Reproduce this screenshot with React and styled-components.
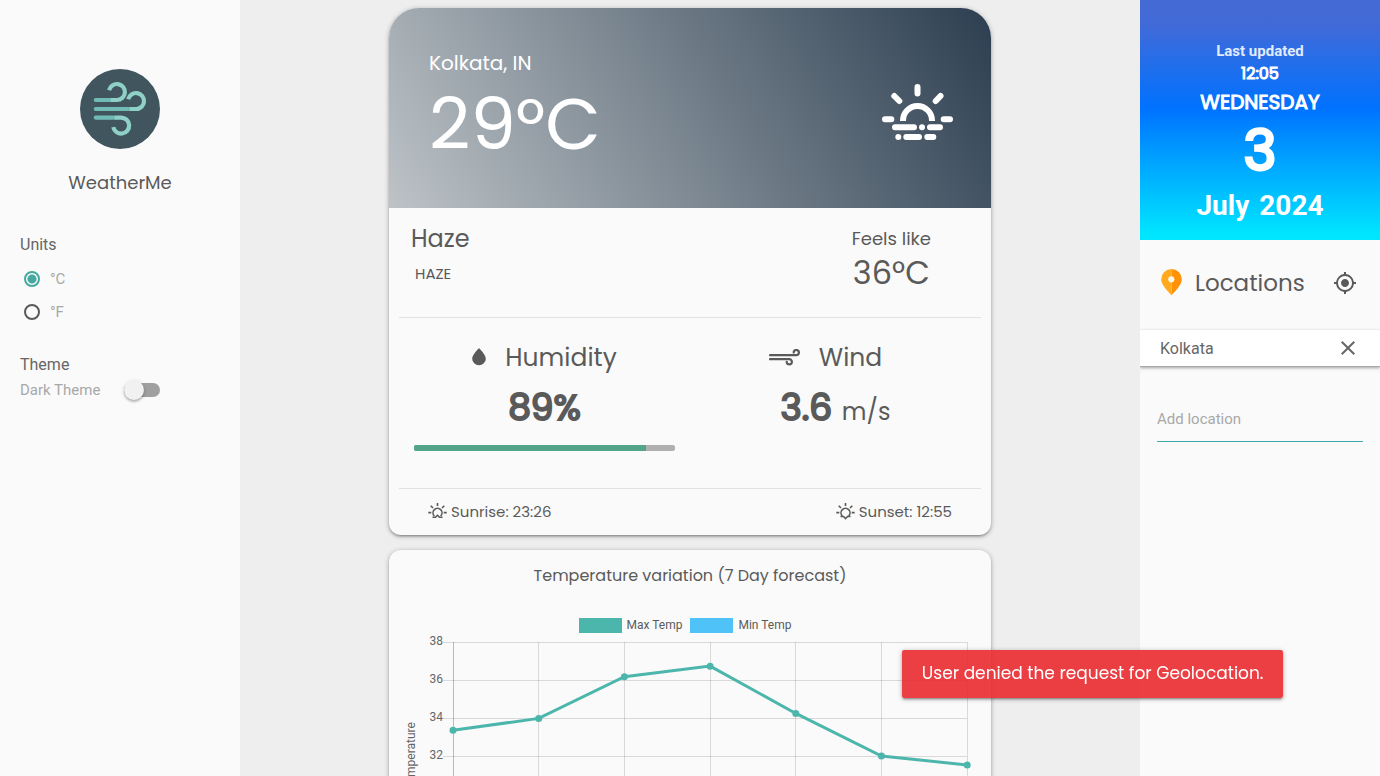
import React, { useState } from "react";
import styled, { createGlobalStyle } from "styled-components";
import { MdMyLocation, MdClose } from "react-icons/md";

const poppins = `Poppins, Inter, "Open Sans", sans-serif`;
const roboto = `Roboto, "Liberation Sans", sans-serif`;
const ink = "#5a5a5a";
const muted = "#a8a8a8";
const surface = "#fafafa";
const teal = "#4db6ac";
const lift = "0 2px 2px 0 rgba(0,0,0,.14), 0 3px 1px -2px rgba(0,0,0,.12), 0 1px 5px 0 rgba(0,0,0,.3)";

const GlobalStyle = createGlobalStyle`
  *, *::before, *::after { box-sizing: border-box; }
  body { margin: 0; background: #eeeeee; color: ${ink}; font-family: ${roboto}; font-size: 15px; }
  h1, h2, h3, p, fieldset, legend { margin: 0; padding: 0; border: 0; font-weight: 400; }
  button { border: 0; padding: 0; background: none; color: inherit; cursor: pointer; display: flex; }
`;

const Page = styled.div`
  display: grid;
  grid-template-columns: 240px minmax(0, 1fr) 240px;
  height: 100vh;
  overflow: hidden;
`;

/* ---------- left menu ---------- */

const Menu = styled.aside`
  background: ${surface};
  padding: 69px 20px 0;
`;

const Brand = styled.div`
  display: flex;
  flex-direction: column;
  align-items: center;
  gap: 20px;
  margin-bottom: 36px;
`;

const BrandName = styled.h1`
  font-family: ${poppins};
  font-size: 18px;
  line-height: 28px;
`;

const Group = styled.fieldset`
  display: flex;
  flex-direction: column;
  margin-bottom: 24px;
`;

const GroupTitle = styled.legend`
  color: #666666;
  font-size: 16px;
  line-height: 24px;
`;

const RadioLabel = styled.label`
  display: flex;
  align-items: center;
  gap: 10px;
  height: 33px;
  padding-left: 4px;
  color: ${muted};
  font-size: 15px;
`;

const RadioList = styled.div`
  padding: 5px 0 1px;
`;

const Radio = styled.input`
  appearance: none;
  width: 16px;
  height: 16px;
  margin: 0;
  border: 2px solid #5a5a5a;
  border-radius: 50%;
  &:checked {
    border-color: #45a99f;
    background: radial-gradient(circle, #45a99f 4px, transparent 5px);
  }
`;

const SwitchLabel = styled.label`
  display: flex;
  align-items: center;
  justify-content: space-between;
  width: 140px;
  height: 26px;
  color: ${muted};
  font-size: 15px;
`;

const Switch = styled.input`
  appearance: none;
  display: flex;
  align-items: center;
  width: 36px;
  height: 14px;
  margin: 0;
  border-radius: 7px;
  background: #a0a0a0;
  &::before {
    content: "";
    width: 20px;
    height: 20px;
    border-radius: 50%;
    background: #f1f1f1;
    box-shadow: 0 2px 2px rgba(0, 0, 0, .2), 0 1px 4px rgba(0, 0, 0, .15);
  }
  &:checked { justify-content: flex-end; background: ${teal}; }
`;

/* ---------- weather ---------- */

const Main = styled.main`
  display: flex;
  flex-direction: column;
  align-items: center;
  gap: 15px;
  padding: 8px 20px;
  overflow-y: auto;
  scrollbar-width: none;
`;

const Card = styled.section`
  flex: none;
  width: 100%;
  max-width: 602px;
  border-radius: ${(p) => (p.$hero ? "30px 30px 12px 12px" : "12px")};
  background: ${surface};
  box-shadow: ${lift};
  font-family: ${poppins};
`;

const Hero = styled.header`
  display: flex;
  justify-content: space-between;
  height: 200px;
  padding: 40px 38px 0 40px;
  border-radius: 30px 30px 0 0;
  background: linear-gradient(60deg, #bdc3c7, #2c3e50);
  color: #ffffff;
  svg { margin-top: 36px; }
`;

const City = styled.h2`
  font-size: 20px;
  line-height: 30px;
`;

const Degrees = styled.p`
  font-size: 72px;
  font-weight: 400;
  line-height: 92px;
`;

const Summary = styled.div`
  display: flex;
  justify-content: space-between;
  height: 109px;
  padding: 16px 60px 0 22px;
`;

const Condition = styled.h3`
  font-size: 24px;
  line-height: 30px;
`;

const Detail = styled.p`
  padding: 10px 0 0 4px;
  font-size: 15px;
  line-height: 20px;
`;

const Feels = styled.div`
  text-align: center;
  font-size: 18px;
  line-height: 30px;
`;

const FeelsValue = styled.p`
  font-size: 32px;
  line-height: 38px;
`;

const Rule = styled.hr`
  height: 1px;
  margin: 0 10px;
  border: 0;
  background: #e2e2e2;
`;

const Metrics = styled.div`
  display: grid;
  grid-template-columns: 1fr 1fr;
  height: 170px;
  padding: 22px 10px 0;
`;

const Metric = styled.div`
  display: flex;
  flex-direction: column;
  align-items: center;
  padding: 0 15px;
`;

const MetricName = styled.h3`
  display: flex;
  align-items: center;
  gap: 19px;
  padding-right: ${(p) => (p.$inset ? "20px" : "0")};
  font-size: 25px;
  line-height: 36px;
  svg { margin-bottom: 2px; }
`;

const MetricValue = styled.p`
  padding-top: 7px;
  font-size: 36px;
  line-height: 50px;
`;

const Strong = styled.strong`
  font-weight: 400;
  -webkit-text-stroke: 2px currentColor;
`;

const Unit = styled.span`
  font-size: 24px;
`;

const Track = styled.div`
  width: 100%;
  height: 6px;
  margin-top: 12px;
  border-radius: 2px;
  background: #b0b0b0;
  overflow: hidden;
`;

const Fill = styled.div`
  height: 100%;
  background: #52a586;
`;

const SunTimes = styled.footer`
  display: flex;
  justify-content: space-between;
  height: 46px;
  padding: 0 39px 2px;
  font-size: 15px;
`;

const SunTime = styled.p`
  display: flex;
  align-items: center;
  gap: 4px;
`;

const ChartTitle = styled.h2`
  padding-top: 12px;
  text-align: center;
  font-size: 16px;
  line-height: 28px;
`;

const Legend = styled.div`
  display: flex;
  justify-content: center;
  gap: 8px;
  padding: 28px 10px 0 0;
  font-family: ${roboto};
  font-size: 12px;
  line-height: 15px;
`;

const LegendItem = styled.span`
  display: flex;
  gap: 5px;
  &::before {
    content: "";
    width: 43px;
    height: 15px;
    background: ${(p) => p.$color};
  }
`;

const Chart = styled.svg`
  display: block;
  width: 100%;
  height: auto;
  font-family: ${roboto};
  font-size: 12px;
  fill: #666666;
`;

/* ---------- right panel ---------- */

const Panel = styled.aside`
  overflow: hidden;
  background: ${surface};
`;

const DateBox = styled.header`
  display: flex;
  flex-direction: column;
  align-items: center;
  height: 240px;
  padding-top: 40px;
  background: linear-gradient(#446ad4, #426ad8 10%, #0072ff 45%, #00e6ff 98%);
  color: #ffffff;
  font-family: ${poppins};
`;

const Updated = styled.p`
  color: #e0ebff;
  font-family: ${roboto};
  font-size: 15px;
  font-weight: 700;
  line-height: 22px;
`;

const Time = styled.p`
  font-size: 16px;
  line-height: 24px;
  -webkit-text-stroke: 1px currentColor;
`;

const Weekday = styled.p`
  font-size: 20px;
  line-height: 32px;
  -webkit-text-stroke: 1px currentColor;
`;

const Day = styled.p`
  padding-top: 2px;
  font-size: 56px;
  line-height: 62px;
  -webkit-text-stroke: 3px currentColor;
`;

const Month = styled.p`
  display: flex;
  gap: 10px;
  padding-top: 6px;
  font-family: ${roboto};
  font-size: 28px;
  font-weight: 700;
  line-height: 36px;
`;

const PanelTitle = styled.h2`
  display: flex;
  align-items: center;
  gap: 13px;
  height: 90px;
  padding: 0 23px 5px 21px;
  font-family: ${poppins};
  font-size: 23px;
  button { margin-left: auto; }
`;

const Place = styled.div`
  display: flex;
  align-items: center;
  justify-content: space-between;
  height: 37px;
  padding: 0 20px;
  border-bottom: 1px solid #a8a8a8;
  background: #ffffff;
  box-shadow: 0 1px 3px rgba(0, 0, 0, .35);
  color: #666666;
  font-size: 16px;
`;

const AddForm = styled.form`
  padding: 30px 17px;
`;

const AddInput = styled.input`
  width: 100%;
  height: 45px;
  padding: 0;
  border: 0;
  border-bottom: 1px solid #3fa9a9;
  outline: 0;
  background: transparent;
  color: ${ink};
  font-family: ${roboto};
  font-size: 15px;
  &::placeholder { color: ${muted}; opacity: 1; }
`;

const Toast = styled.div`
  position: fixed;
  right: 7%;
  bottom: 10%;
  display: flex;
  align-items: center;
  height: 48px;
  padding: 0 20px 2px;
  border-radius: 2px;
  background: rgba(233, 42, 48, .9);
  box-shadow: ${lift};
  color: #ffffff;
  font-family: ${poppins};
  font-size: 17px;
`;

/* ---------- drawings ---------- */

const Logo = () => (
  <svg width="80" height="80" viewBox="0 0 80 80" fill="none" strokeWidth="4.2" role="img" aria-label="WeatherMe logo">
    <circle cx="40" cy="40" r="40" fill="#41555f" />
    <g stroke="#8fd1c7">
      <path d="M29.1 21.3A8 8 0 1 1 36.8 31H30" />
      <path d="M48.2 30.3A8 8 0 1 1 56 40H49" />
      <path d="M33.3 58.2A8 8 0 1 0 41 48.6H34" />
    </g>
    <g stroke="#70bbb5" strokeLinecap="round">
      <path d="M15.8 31H29M15.8 40H48M15.8 48.6H33" />
    </g>
  </svg>
);

const HazeIcon = () => (
  <svg width="71" height="56" viewBox="0 0 71 56" fill="none" stroke="#fff" strokeWidth="6" strokeLinecap="round">
    <path d="M35.5 3V9.5M12.3 12l5 5M53.7 17l4.8-5M3 35.2h6.3M61.7 35.2H68M13 43.3h19M48 43.3h10M24.3 53H37M45.3 53h6M40 43.3h.01M16.3 53h.01" />
    <path d="M21 37v-.5a14.5 14.5 0 0 1 29 0v.5" strokeLinecap="butt" />
  </svg>
);

const DropIcon = () => (
  <svg width="14" height="18" viewBox="0 0 14 18" fill={ink}>
    <path d="M7 0C5.2 2.1.2 6.8.2 10.7a6.8 6.5 0 0 0 13.6 0C13.8 6.8 8.8 2.1 7 0z" />
  </svg>
);

const WindIcon = () => (
  <svg width="31" height="17" viewBox="0 0 31 17" fill="none" stroke={ink} strokeWidth="2.2" strokeLinecap="round">
    <path d="M1 6.2H27.3a2.6 2.6 0 1 0-2.6-2.6M1 10.2H20.3a2.6 2.6 0 1 1-2.6 2.6" />
  </svg>
);

const SunIcon = ({ base }) => (
  <svg width="19" height="17" viewBox="0 0 19 17" fill="none" stroke={ink} strokeWidth="1.6">
    <path d="M9.5 0v3M2.7 2.7l2.3 2.3M16.3 2.7 14 5M.3 9.6h3M15.7 9.6h3" />
    <path d="M6.3 13a4.5 4.5 0 1 1 6.4 0" />
    <path d={base} />
  </svg>
);

const PinIcon = () => (
  <svg width="21" height="27" viewBox="0 0 21 27">
    <path d="M10.5 0A10.3 10.3 0 0 0 .2 10.3C.2 16 6.5 21.5 10.5 26.6z" fill="#ffa91f" />
    <path d="M10.5 0a10.3 10.3 0 0 1 10.3 10.3c0 5.7-6.3 11.2-10.3 16.3z" fill="#ff9305" />
    <circle cx="10.3" cy="10.3" r="3.1" fill="#fff8e8" />
  </svg>
);

/* ---------- forecast chart ---------- */

const LEFT = 64;
const STEP_X = 85.7;
const TOP = 9;
const STEP_Y = 38;
const MAX = [33.35, 33.98, 36.17, 36.73, 34.24, 32.0, 31.53];
const MIN = [27.1, 27.4, 28.2, 28.4, 27.9, 27.2, 26.9];
const TICKS = [38, 36, 34, 32, 30, 28, 26];
const xOf = (i) => LEFT + i * STEP_X;
const yOf = (t) => TOP + ((38 - t) / 2) * STEP_Y;

const Series = ({ data, color }) => (
  <g>
    <polyline points={data.map((t, i) => `${xOf(i)},${yOf(t)}`).join(" ")} fill="none" stroke={color} strokeWidth="3" />
    {data.map((t, i) => (
      <circle key={i} cx={xOf(i)} cy={yOf(t)} r="3.5" fill={color} />
    ))}
  </g>
);

const ForecastChart = () => (
  <Chart viewBox="0 0 602 262" role="img" aria-label="Seven day maximum and minimum temperature">
    <g stroke="#000" strokeOpacity=".13" shapeRendering="crispEdges">
      {TICKS.map((t) => (
        <line key={t} x1={LEFT - 10} x2={xOf(6)} y1={yOf(t) + 0.5} y2={yOf(t) + 0.5} />
      ))}
      {MAX.map((_, i) => (
        <line key={i} x1={xOf(i)} x2={xOf(i)} y1={TOP} y2={yOf(26) + 10} strokeOpacity={i ? 0.13 : 0.25} />
      ))}
    </g>
    {TICKS.map((t) => (
      <text key={t} x={LEFT - 10} y={yOf(t) + 3} textAnchor="end">{t}</text>
    ))}
    <text transform={`translate(26 ${yOf(32)}) rotate(-90)`} textAnchor="middle">Temperature</text>
    <Series data={MIN} color="#4fc3f7" />
    <Series data={MAX} color={teal} />
  </Chart>
);

export default function App() {
  const [unit, setUnit] = useState("C");
  const [dark, setDark] = useState(false);
  const [place, setPlace] = useState("");
  const humidity = 89;

  return (
    <>
      <GlobalStyle />
      <Page>
        <Menu>
          <Brand>
            <Logo />
            <BrandName>WeatherMe</BrandName>
          </Brand>
          <Group>
            <GroupTitle>Units</GroupTitle>
            <RadioList>
              {["C", "F"].map((u) => (
                <RadioLabel key={u}>
                  <Radio type="radio" name="unit" checked={unit === u} onChange={() => setUnit(u)} />
                  °{u}
                </RadioLabel>
              ))}
            </RadioList>
          </Group>
          <Group>
            <GroupTitle>Theme</GroupTitle>
            <SwitchLabel>
              Dark Theme
              <Switch type="checkbox" checked={dark} onChange={(e) => setDark(e.target.checked)} />
            </SwitchLabel>
          </Group>
        </Menu>

        <Main>
          <Card $hero>
            <Hero>
              <div>
                <City>Kolkata, IN</City>
                <Degrees>29°C</Degrees>
              </div>
              <HazeIcon />
            </Hero>
            <Summary>
              <div>
                <Condition>Haze</Condition>
                <Detail>HAZE</Detail>
              </div>
              <Feels>
                <p>Feels like</p>
                <FeelsValue>36°C</FeelsValue>
              </Feels>
            </Summary>
            <Rule />
            <Metrics>
              <Metric>
                <MetricName><DropIcon />Humidity</MetricName>
                <MetricValue><Strong>{humidity}%</Strong></MetricValue>
                <Track><Fill style={{ width: `${humidity}%` }} /></Track>
              </Metric>
              <Metric>
                <MetricName $inset><WindIcon />Wind</MetricName>
                <MetricValue><Strong>3.6</Strong> <Unit>m/s</Unit></MetricValue>
              </Metric>
            </Metrics>
            <Rule />
            <SunTimes>
              <SunTime><SunIcon base="M4.5 14.3h3l2-2 2 2h3" />Sunrise: 23:26</SunTime>
              <SunTime><SunIcon base="M4.5 13.5h3l2 2 2-2h3" />Sunset: 12:55</SunTime>
            </SunTimes>
          </Card>

          <Card>
            <ChartTitle>Temperature variation (7 Day forecast)</ChartTitle>
            <Legend>
              <LegendItem $color={teal}>Max Temp</LegendItem>
              <LegendItem $color="#4fc3f7">Min Temp</LegendItem>
            </Legend>
            <ForecastChart />
          </Card>
        </Main>

        <Panel>
          <DateBox>
            <Updated>Last updated</Updated>
            <Time>12:05</Time>
            <Weekday>WEDNESDAY</Weekday>
            <Day>3</Day>
            <Month><span>July</span><span>2024</span></Month>
          </DateBox>
          <PanelTitle>
            <PinIcon />
            Locations
            <button type="button" aria-label="Use my location"><MdMyLocation size={24} /></button>
          </PanelTitle>
          <Place>
            Kolkata
            <button type="button" aria-label="Remove Kolkata"><MdClose size={24} /></button>
          </Place>
          <AddForm onSubmit={(e) => e.preventDefault()}>
            <AddInput
              type="text"
              aria-label="Add location"
              placeholder="Add location"
              value={place}
              onChange={(e) => setPlace(e.target.value)}
            />
          </AddForm>
        </Panel>
      </Page>
      <Toast role="alert">User denied the request for Geolocation.</Toast>
    </>
  );
}
